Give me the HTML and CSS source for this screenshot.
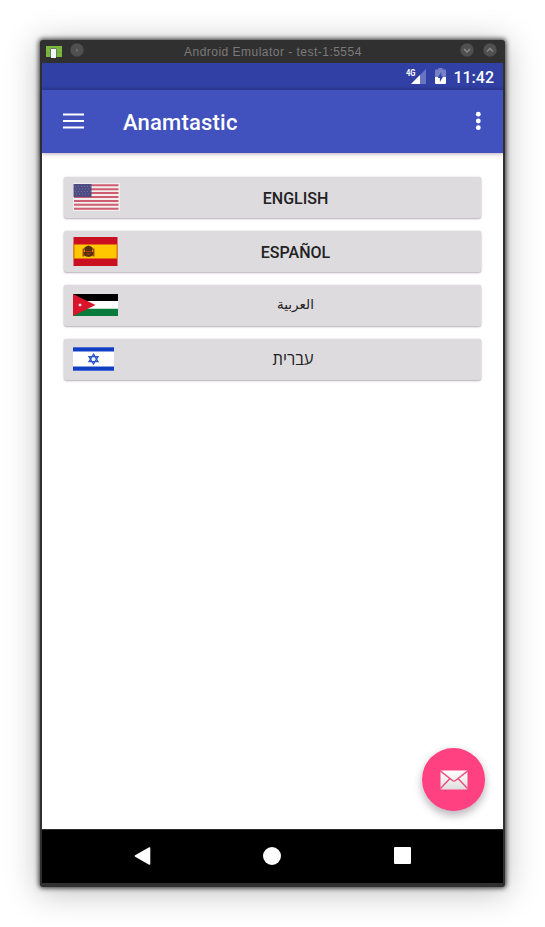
FILE: index.html
```html
<!DOCTYPE html>
<html lang="en">
<head>
<meta charset="utf-8">
<title>Anamtastic</title>
<link rel="stylesheet" href="styles.css">
</head>
<body>
<div class="window">
  <header class="titlebar">
    <svg class="app-icon" width="16" height="12" viewBox="0 0 16 12"><path fill="#79b83d" d="M0 0h16v11H0z"/><path fill="#6fac3a" d="M0 6h16v1H0z"/><path fill="#6b7a66" d="M4 3l1-1h5l1 1v8H4z"/><path fill="#f4f4f4" d="M5 3h5v9H5z"/></svg>
    <svg class="round round-menu" width="14" height="14" viewBox="0 0 14 14"><circle class="knob" cx="7" cy="7" r="6.800"/><path d="M7 6v2.500" stroke="#8a8a8a"/></svg>
    <span class="window-title">Android Emulator - test-1:5554</span>
    <svg class="round" width="14" height="14" viewBox="0 0 14 14"><circle class="knob" cx="7" cy="7" r="6.800"/><path class="arrow" d="M4 6l3 3 3-3"/></svg>
    <svg class="round" width="14" height="14" viewBox="0 0 14 14"><circle class="knob" cx="7" cy="7" r="6.800"/><path class="arrow" d="M4 8.500l3-3 3 3"/></svg>
  </header>
  <div class="statusbar">
    <svg width="20" height="17" viewBox="0 0 20 17"><path fill="#6a75c2" d="M20 1v15H5z"/><path fill="#fff" d="M14 7v9H5z"/><path fill="#3140a5" d="M0 0h10v8H0z"/><text class="net" x="0" y="7.500" textLength="9.500" lengthAdjust="spacingAndGlyphs">4G</text></svg>
    <svg class="battery" width="11" height="17" viewBox="0 0 11 17"><path fill="#7781c8" d="M3.500 0h4v1.600H10q1 0 1 1V9H0V2.600q0-1 1-1h2.500z"/><path fill="#fff" d="M0 9h11v6q0 1-1 1H1q-1 0-1-1z"/><path fill="#3140a5" d="M6.200 4v4.200H8.300L4.900 14V10H2.800z"/></svg>
    <span class="clock">11:42</span>
  </div>
  <div class="appbar">
    <svg class="burger" width="21" height="16" viewBox="0 0 21 16"><path d="M0 1.500h21M0 8h21M0 14.500h21" stroke="#fff" stroke-width="2"/></svg>
    <h1>Anamtastic</h1>
    <svg class="more" width="6" height="20" viewBox="0 0 6 20" fill="#fff"><circle cx="3.300" cy="3.200" r="2.400"/><circle cx="3.300" cy="10" r="2.400"/><circle cx="3.300" cy="16.700" r="2.400"/></svg>
  </div>
  <main class="content">
    <button class="lang"><svg class="flag" width="47" height="28" viewBox="0 0 47 28"><path fill="#f3eeee" d="M0 0h47v28H0z"/><path d="M1 2.300h44.500M1 6.200h44.500M1 10.100h44.500M1 14h44.500M1 17.900h44.500M1 21.800h44.500M1 25.700h44.500" stroke="#cf5d71" stroke-width="2"/><path fill="#4d4c83" d="M.5 1H18.500v13H.5z"/><path d="M2 3.500h16M3 6h15M2 8.500h16M3 11h15" stroke="#706e9c" stroke-dasharray="1 2"/></svg><span class="label">ENGLISH</span></button>
    <button class="lang"><svg class="flag" width="47" height="31" viewBox="0 0 47 31"><path fill="#ca1020" d="M.5 1h44v29H.5z"/><path fill="#ffc700" d="M.5 8.500h44v14H.5z"/><path fill="#a54b18" d="M9.500 12.500h1.500v8H9.500zM20 12.500h1.500v8H20z"/><path fill="#54300f" d="M12 11l3.500-1.500 3.500 1.500 1 2-1 2 1.500 2-1 3-4 1-4-1-1-3 1.500-2-1-2z"/><path stroke="#b33c15" d="M12.500 15.500h6M13.500 18h4"/><path fill="none" stroke="#ce6b15" d="M1 8.500v14M44 8.500v14"/></svg><span class="label">ESPAÑOL</span></button>
    <button class="lang"><svg class="flag" width="47" height="24" viewBox="0 0 47 24"><path fill="#fff" d="M0 1h45v22H0z"/><path d="M0 1h45v7H0z"/><path fill="#087b3c" d="M0 15.700h45V23H0z"/><path fill="#d8152a" d="M0 1l22.500 11L0 23z"/><path fill="#fff" d="M7 10l.6 1.300 1.400.7-1.400.7L7 14l-.6-1.300L5 12l1.400-.7z"/></svg><span class="label rtl" lang="ar" dir="rtl">العربية</span></button>
    <button class="lang"><svg class="flag" width="47" height="26" viewBox="0 0 47 26"><path fill="#fff" d="M0 1h41v24H0z"/><path fill="#103fc4" d="M0 1.300h41v4.200H0zM0 20.500h41v4.200H0z"/><path fill="none" stroke="#2753cf" stroke-width="1.300" d="M20.500 8.200l4.500 7.400h-9zM20.500 18l4.500-7.400h-9z"/></svg><span class="label hebrew" lang="he" dir="rtl">עברית</span></button>
    <button class="fab" aria-label="Email"><svg width="28" height="20" viewBox="0 0 28 20"><defs><linearGradient id="paper" x2="0" y2="1"><stop stop-color="#fff"/><stop offset="1" stop-color="#dedede"/></linearGradient></defs><rect x=".5" y=".5" width="27" height="19" rx="1" fill="url(#paper)"/><path d="M.5 1.200l12 9.300q1.500 1 3 0l12-9.300M.5 18.500l9-9.500M27.500 18.500l-9-9.500" fill="none" stroke="#ef4d80" stroke-width="1.500"/></svg></button>
  </main>
  <nav class="navbar">
    <svg width="17" height="18" viewBox="0 0 17 18"><path fill="#fff" stroke="#fff" stroke-width="1.600" stroke-linejoin="round" d="M1.500 9L15.500 1v16z"/></svg>
    <svg class="home" width="18" height="18" viewBox="0 0 18 18"><circle cx="9" cy="9" r="9" fill="#fff"/></svg>
    <svg width="17" height="17" viewBox="0 0 17 17"><rect width="17" height="17" rx="1" fill="#fff"/></svg>
  </nav>
</div>
</body>
</html>
```
FILE: styles.css
```css
* { box-sizing: border-box; }
body {
  margin: 0;
  padding: 40px;
  height: 927px;
  overflow: hidden;
  background: #fff;
  font-family: Roboto, "Noto Sans", sans-serif;
}
.window {
  width: 465px;
  height: 847px;
  display: flex;
  flex-direction: column;
  background: #303030;
  padding: 0 2px 4px;
  border-radius: 3px;
  box-shadow: 0 0 5px 1px rgba(0, 0, 0, .8), 0 4px 32px 2px rgba(0, 0, 0, .25);
}
svg { display: block; flex: none; }
.titlebar {
  height: 23px;
  display: flex;
  align-items: center;
  padding: 0 6px 3px 4px;
  gap: 9px;
}
.app-icon { margin-top: 3px; }
.round { margin-top: 0; }
.round-menu { margin-left: -1px; }
.knob { fill: #505050; stroke: #3a3a3a; stroke-width: .4; }
.arrow { fill: none; stroke: #898989; stroke-width: 1.5; }
.window-title {
  flex: 1;
  padding: 4px 0 0 91px;
  color: #7c7a79;
  font: 12px/16px "Liberation Sans", sans-serif;
  letter-spacing: .48px;
  white-space: nowrap;
}
.statusbar {
  height: 27px;
  display: flex;
  align-items: center;
  justify-content: flex-end;
  padding-right: 9px;
  color: #fff;
  background: linear-gradient(#3140a5 85%, #2b3893);
}
.net { font: bold 9px Roboto, sans-serif; fill: #fff; }
.battery { margin: 0 8px 0 9px; }
.clock {
  margin-left: -1px;
  font-size: 16px;
  font-weight: 500;
  line-height: 27px;
  padding-top: 2px;
}
.appbar {
  height: 63px;
  display: flex;
  align-items: center;
  padding: 0 22px 0 21px;
  color: #fff;
  background: #4151bd;
  box-shadow: 0 1px 4px rgba(60, 20, 50, .35);
  z-index: 1;
}
.burger { margin-top: -1px; }
.more { margin-top: -1px; }
.appbar h1 {
  flex: 1;
  margin: 2px 0 0 39px;
  font-size: 22px;
  line-height: 28px;
  font-weight: 500;
  letter-spacing: .2px;
}
.content {
  flex: 1;
  display: flex;
  flex-direction: column;
  gap: 13px;
  padding: 24px 22px 18px;
  background: #fff;
}
.lang {
  height: 41px;
  display: flex;
  align-items: center;
  margin: 0;
  padding: 0 53px 0 9px;
  border: 0;
  border-radius: 2px;
  background: #dddbde;
  color: #222123;
  box-shadow: 0 1px 2px rgba(40, 20, 40, .3), 0 0 2px rgba(60, 20, 60, .15);
  font: 500 16px/20px Roboto, sans-serif;
}
.flag { margin-top: -1px; }
.label { flex: 1; padding-left: 43px; text-align: center; padding-top: 2px; }
.rtl {
  padding-top: 0;
  margin-top: -3px;
  font: 13.500px/20px "DejaVu Sans", "Noto Sans", sans-serif;
}
.hebrew {
  padding: 0 5px 2px 43px;
  font: 16.500px/20px "Noto Sans", "Open Sans", sans-serif;
}
.fab {
  width: 63px;
  height: 63px;
  margin: auto -4px 0 auto;
  padding: 0;
  border: 0;
  border-radius: 50%;
  display: flex;
  align-items: center;
  justify-content: center;
  background: #ff4081;
  box-shadow: 0 5px 9px rgba(20, 0, 20, .25), 0 1px 9px rgba(80, 0, 80, .08);
}
.navbar {
  height: 54px;
  display: flex;
  align-items: center;
  justify-content: space-between;
  padding: 0 92px 2px;
  background: #000;
  border-top: 1px solid #272b29;
}
.home { margin-left: -1px; }
```
